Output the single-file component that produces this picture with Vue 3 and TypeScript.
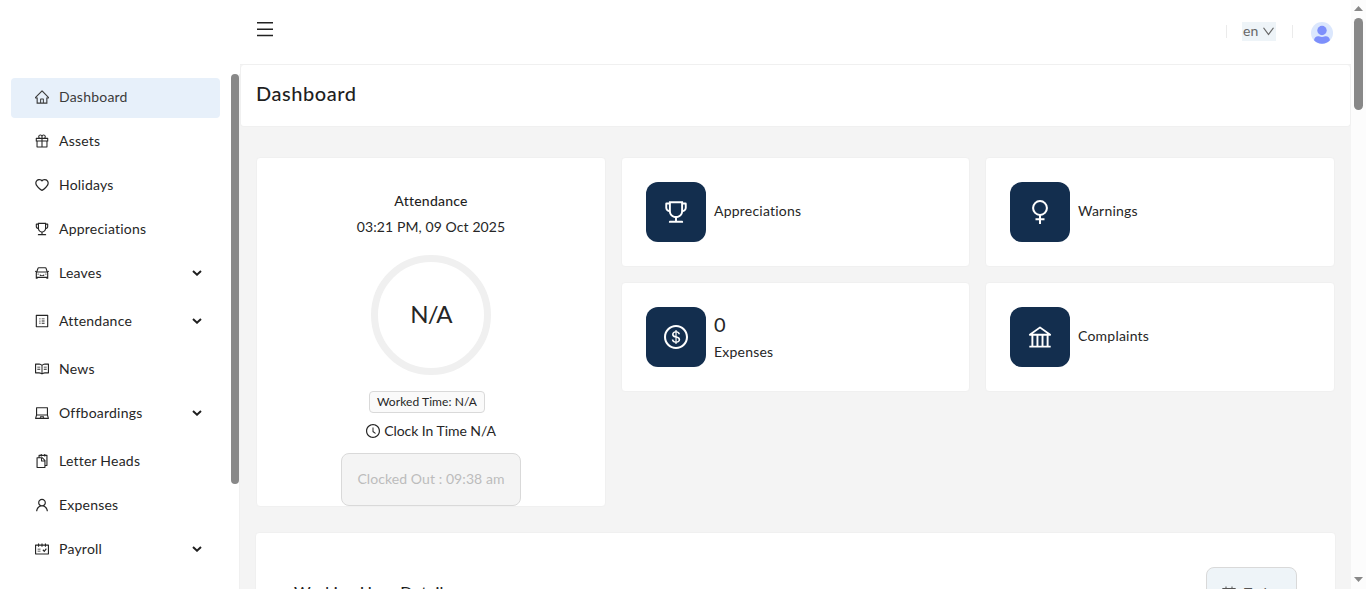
<script setup lang="ts">
type Shape = { paths: string[]; strokes?: string[] }

const ring = 'M512 64C264.6 64 64 264.6 64 512s200.6 448 448 448 448-200.6 448-448S759.4 64 512 64zm0 820c-205.4 0-372-166.6-372-372s166.6-372 372-372 372 166.6 372 372-166.6 372-372 372z'

const icons: Record<string, Shape> = {
  home: { paths: ['M946.5 505L560.1 118.8l-25.9-25.9a31.5 31.5 0 00-44.4 0L77.5 505a63.9 63.9 0 00-18.8 46c.4 35.2 29.7 63.3 64.9 63.3h42.5V940h691.8V614.3h43.4c17.1 0 33.2-6.7 45.3-18.8a63.6 63.6 0 0018.7-45.3c0-17-6.7-33.1-18.8-45.2zM568 868H456V664h112v204zm217.9-325.7V868H632V640c0-22.1-17.9-40-40-40H432c-22.1 0-40 17.9-40 40v228H238.1V542.3h-96l370-369.7 23.1 23.1L882 542.3h-96.1z'] },
  gift: { paths: ['M880 310H732.4c13.6-21.4 21.6-46.8 21.6-74 0-76.1-61.9-138-138-138-41.4 0-78.7 18.4-104 47.4-25.3-29-62.6-47.4-104-47.4-76.1 0-138 61.9-138 138 0 27.2 7.9 52.6 21.6 74H144c-17.7 0-32 14.3-32 32v200c0 4.4 3.6 8 8 8h40v344c0 17.7 14.3 32 32 32h640c17.7 0 32-14.3 32-32V550h40c4.4 0 8-3.6 8-8V342c0-17.7-14.3-32-32-32zm-334-74c0-38.6 31.4-70 70-70s70 31.4 70 70-31.4 70-70 70h-70v-70zm-138-70c38.6 0 70 31.4 70 70v70h-70c-38.6 0-70-31.4-70-70s31.4-70 70-70zM180 482V378h298v104H180zm48 68h250v308H228V550zm568 308H546V550h250v308zm48-376H546V378h298v104z'] },
  heart: { paths: ['M923 283.6a260.04 260.04 0 00-56.9-82.8 264.4 264.4 0 00-84-55.5A265.34 265.34 0 00679.7 125c-49.3 0-97.4 13.5-139.2 39-10 6.1-19.5 12.8-28.5 20.1-9-7.3-18.5-14-28.5-20.1-41.8-25.5-89.9-39-139.2-39-35.5 0-69.9 6.8-102.4 20.3-31.4 13-59.7 31.7-84 55.5a258.44 258.44 0 00-56.9 82.8c-13.9 32.3-21 66.6-21 101.9 0 33.3 6.8 68 20.3 103.3 11.3 29.5 27.5 60.1 48.2 91 32.8 48.9 77.9 99.9 133.9 151.6 92.8 85.7 184.7 144.9 188.6 147.3l23.7 15.2c10.5 6.7 24 6.7 34.5 0l23.7-15.2c3.9-2.5 95.7-61.6 188.6-147.3 56-51.7 101.1-102.7 133.9-151.6 20.7-30.9 37-61.5 48.2-91 13.5-35.3 20.3-70 20.3-103.3.1-35.3-7-69.6-20.9-101.9zM512 814.8S156 586.7 156 385.5C156 283.6 240.3 201 344.3 201c73.1 0 136.5 40.8 167.7 100.4C543.2 241.8 606.6 201 679.7 201c104 0 188.3 82.6 188.3 184.5 0 201.2-356 429.3-356 429.3z'] },
  trophy: { paths: ['M868 160h-92v-40c0-4.4-3.6-8-8-8H256c-4.4 0-8 3.6-8 8v40h-92a44 44 0 00-44 44v148c0 81.7 60 149.6 138.2 162C265.7 630.2 359 721.7 476 734.5v105.2H280c-17.7 0-32 14.3-32 32V904c0 4.4 3.6 8 8 8h512c4.4 0 8-3.6 8-8v-32.3c0-17.7-14.3-32-32-32H548V734.5C665 721.7 758.3 630.2 773.8 514 852 501.6 912 433.7 912 352V204a44 44 0 00-44-44zM184 352V232h64v207.6a91.99 91.99 0 01-64-87.6zm520 128c0 49.1-19.1 95.4-53.9 130.1-34.8 34.8-81 53.9-130.1 53.9h-16c-49.1 0-95.4-19.1-130.1-53.9-34.8-34.8-53.9-81-53.9-130.1V184h384v296zm136-128c0 41-26.9 75.8-64 87.6V232h64v120z'] },
  car: { paths: ['M959 413.4L935.3 372a8 8 0 00-10.9-2.9l-50.7 29.6-78.3-216.2a63.9 63.9 0 00-60.9-44.4H301.2c-34.7 0-65.5 22.4-76.2 55.5l-74.6 205.2-50.8-29.6a8 8 0 00-10.9 2.9L65 413.4c-2.2 3.8-.9 8.6 2.9 10.8l60.4 35.2-14.5 40c-1.2 3.2-1.8 6.6-1.8 10v348.2c0 15.7 11.8 28.4 26.3 28.4h67.6c12.3 0 23-9.3 25.6-22.3l7.7-37.7h545.6l7.7 37.7c2.7 13 13.3 22.3 25.6 22.3h67.6c14.5 0 26.3-12.7 26.3-28.4V509.4c0-3.4-.6-6.8-1.8-10l-14.5-40 60.3-35.2a8 8 0 003-10.8zM840 517v237H184V517l15.6-43h624.8l15.6 43zM292.7 218.1l.5-1.3.4-1.3c1.1-3.3 4.1-5.5 7.6-5.5h427.6l75.4 208H220l72.7-199.9z', 'M380 704h264c4.4 0 8-3.6 8-8v-84c0-4.4-3.6-8-8-8h-40c-4.4 0-8 3.6-8 8v36H428v-36c0-4.4-3.6-8-8-8h-40c-4.4 0-8 3.6-8 8v84c0 4.4 3.6 8 8 8zM224 581a40 40 0 1080 0 40 40 0 10-80 0zM720 581a40 40 0 1080 0 40 40 0 10-80 0z'] },
  profile: { paths: ['M880 112H144c-17.7 0-32 14.3-32 32v736c0 17.7 14.3 32 32 32h736c17.7 0 32-14.3 32-32V144c0-17.7-14.3-32-32-32zm-40 728H184V184h656v656z', 'M492 400h184v-56H492zM492 540h184v-56H492zM492 680h184v-56H492zM340 372a40 40 0 1080 0 40 40 0 10-80 0zM340 512a40 40 0 1080 0 40 40 0 10-80 0zM340 652a40 40 0 1080 0 40 40 0 10-80 0z'] },
  read: { paths: ['M928 161H699.2c-49.1 0-97.1 14.1-138.4 40.7L512 233l-48.8-31.3A255.2 255.2 0 00324.8 161H96c-17.7 0-32 14.3-32 32v568c0 17.7 14.3 32 32 32h228.8c49.1 0 97.1 14.1 138.4 40.7l44.4 28.6c1.3.8 2.8 1.3 4.3 1.3s3-.4 4.3-1.3l44.4-28.6C602 807.1 650.1 793 699.2 793H928c17.7 0 32-14.3 32-32V193c0-17.7-14.3-32-32-32zM324.8 721H136V233h188.8c35.4 0 69.8 10.1 99.5 29.2l48.8 31.3 6.9 4.5v462c-47.6-25.6-100.8-39-155.2-39zm563.2 0H699.2c-54.4 0-107.6 13.4-155.2 39V298l6.9-4.5 48.8-31.3c29.7-19.1 64.1-29.2 99.5-29.2H888v488z', 'M211 361h186v60H211zM627 361h186v60H627zM211 501h186v60H211zM627 501h186v60H627z'] },
  laptop: { paths: ['M956.9 845.1L896.4 632V168c0-17.7-14.3-32-32-32h-704c-17.7 0-32 14.3-32 32v464L67.9 845.1C60.4 866 75.8 888 98 888h828.8c22.2 0 37.6-22 30.1-42.9zM200.4 208h624v395h-624V208zm228.3 608l8.1-37h150.3l8.1 37H428.7zm224 0l-19.1-86.7c-.8-3.7-4.1-6.3-7.8-6.3H398.2c-3.8 0-7 2.6-7.8 6.3L371.3 816H151l42.3-149h638.2l42.3 149H652.7z'] },
  snippets: { paths: ['M832 112H724V72c0-4.4-3.6-8-8-8h-56c-4.4 0-8 3.6-8 8v40H500V72c0-4.4-3.6-8-8-8h-56c-4.4 0-8 3.6-8 8v40H320c-17.7 0-32 14.3-32 32v120h-96c-17.7 0-32 14.3-32 32v632c0 17.7 14.3 32 32 32h512c17.7 0 32-14.3 32-32v-96h96c17.7 0 32-14.3 32-32V144c0-17.7-14.3-32-32-32zM664 888H232V336h218v174c0 22.1 17.9 40 40 40h174v338zm0-402H514V336h.2L664 485.8v.2zm128 274h-56V456L544 264H360v-80h68v32c0 4.4 3.6 8 8 8h56c4.4 0 8-3.6 8-8v-32h152v32c0 4.4 3.6 8 8 8h56c4.4 0 8-3.6 8-8v-32h68v576z'] },
  user: { paths: ['M858.5 763.6a374 374 0 00-80.6-119.5 375.63 375.63 0 00-119.5-80.6c-.4-.2-.8-.3-1.2-.5C719.5 518 760 444.7 760 362c0-137-111-248-248-248S264 225 264 362c0 82.7 40.5 156 102.8 201.1-.4.2-.8.3-1.2.5-44.8 18.9-85 46-119.5 80.6a375.63 375.63 0 00-80.6 119.5A371.7 371.7 0 00136 901.8a8 8 0 008 8.2h60c4.4 0 7.9-3.5 8-7.8 2-77.2 33-149.5 87.8-204.3 56.7-56.7 132-87.9 212.2-87.9s155.5 31.2 212.2 87.9C779 752.7 810 825 812 902.2c.1 4.4 3.6 7.8 8 7.8h60a8 8 0 008-8.2c-1-47.8-10.9-94.3-29.5-138.2zM512 534c-45.9 0-89.1-17.9-121.6-50.4S340 407.9 340 362c0-45.9 17.9-89.1 50.4-121.6S466.1 190 512 190s89.1 17.9 121.6 50.4S684 316.1 684 362c0 45.9-17.9 89.1-50.4 121.6S557.9 534 512 534z'] },
  schedule: { paths: ['M928 224H768v-56c0-4.4-3.6-8-8-8h-56c-4.4 0-8 3.6-8 8v56H548v-56c0-4.4-3.6-8-8-8h-56c-4.4 0-8 3.6-8 8v56H328v-56c0-4.4-3.6-8-8-8h-56c-4.4 0-8 3.6-8 8v56H96c-17.7 0-32 14.3-32 32v576c0 17.7 14.3 32 32 32h832c17.7 0 32-14.3 32-32V256c0-17.7-14.3-32-32-32zm-40 568H136V296h120v56c0 4.4 3.6 8 8 8h56c4.4 0 8-3.6 8-8v-56h148v56c0 4.4 3.6 8 8 8h56c4.4 0 8-3.6 8-8v-56h148v56c0 4.4 3.6 8 8 8h56c4.4 0 8-3.6 8-8v-56h120v496z', 'M416 496H232v48h184zM416 616H232v48h184z'], strokes: ['M570 560L658 664L790 488'] },
  woman: { paths: [], strokes: ['M512 104a258 258 0 100 516 258 258 0 100-516zM512 620V960M344 780H680'] },
  dollar: { paths: [ring, 'M559.7 488.8l-25.4-5.9V348.6c38 5.2 61.5 29 65.5 58.2.5 4 3.9 6.9 7.9 6.9h44.9c4.7 0 8.4-4.1 8-8.8-6.1-62.3-57.4-102.3-125.9-109.2V263c0-4.4-3.6-8-8-8h-28.1c-4.4 0-8 3.6-8 8v33c-70.8 6.9-126.2 46-126.2 119 0 67.6 49.8 100.2 102.1 112.7l24.7 6.3v142.7c-44.2-5.9-69-29.5-74.1-61.3-.6-3.8-4-6.6-7.9-6.6H363c-4.7 0-8.4 4-8 8.7 4.5 55 46.2 105.6 135.2 112.1V761c0 4.4 3.6 8 8 8h28.4c4.4 0 8-3.6 8-8.1l-.2-31.7c78.3-6.9 134.3-48.8 134.3-124-.1-69.4-44.2-100.4-109-116.4zm-68.6-16.2c-5.6-1.6-10.3-3.1-15-5-33.8-12.2-49.5-31.9-49.5-57.3 0-36.3 27.5-57 64.5-61.7v124zM534.3 677V543.3c3.1.9 5.9 1.6 8.8 2.2 47.3 14.4 63.2 34.4 63.2 65.1 0 39.1-29.4 62.6-72 66.4z'] },
  bank: { paths: ['M894 462c30.9 0 43.8-39.7 18.7-58L530.8 126.2a31.81 31.81 0 00-37.6 0L111.3 404c-25.1 18.2-12.2 58 18.8 58H192v374h-72c-4.4 0-8 3.6-8 8v52c0 4.4 3.6 8 8 8h784c4.4 0 8-3.6 8-8v-52c0-4.4-3.6-8-8-8h-72V462h62zM512 196.7l271.1 197.3H240.9L512 196.7zM264 462h117v374H264V462zm189 0h117v374H453V462zm307 374H642V462h118v374z'] },
  clock: { paths: [ring, 'M686.7 638.6L544.1 535.5V288c0-4.4-3.6-8-8-8H488c-4.4 0-8 3.6-8 8v275.4c0 2.6 1.2 5 3.3 6.5l165.4 120.6c3.6 2.6 8.6 1.8 11.2-1.7l28.6-39c2.6-3.7 1.8-8.7-1.8-11.2z'] },
  down: { paths: ['M884 256h-75c-5.1 0-9.9 2.5-12.9 6.6L512 654.2 227.9 262.6c-3-4.1-7.8-6.6-12.9-6.6h-75c-6.5 0-10.3 7.4-6.5 12.7l352.6 486.1c12.8 17.6 39 17.6 51.7 0l352.6-486.1c3.9-5.3.1-12.7-6.4-12.7z'] },
}

const menu = [
  { label: 'Dashboard', icon: 'home', active: true },
  { label: 'Assets', icon: 'gift' },
  { label: 'Holidays', icon: 'heart' },
  { label: 'Appreciations', icon: 'trophy' },
  { label: 'Leaves', icon: 'car', sub: true },
  { label: 'Attendance', icon: 'profile', sub: true },
  { label: 'News', icon: 'read' },
  { label: 'Offboardings', icon: 'laptop', sub: true },
  { label: 'Letter Heads', icon: 'snippets' },
  { label: 'Expenses', icon: 'user' },
  { label: 'Payroll', icon: 'schedule', sub: true },
]

const stats = [
  { label: 'Appreciations', icon: 'trophy' },
  { label: 'Warnings', icon: 'woman' },
  { label: 'Expenses', icon: 'dollar', value: '0' },
  { label: 'Complaints', icon: 'bank' },
]
</script>

<template>
  <div class="app">
    <aside class="sidebar">
      <nav class="menu">
        <a v-for="m in menu" :key="m.label" class="item" :class="{ active: m.active, sub: m.sub }">
          <svg class="icon" viewBox="64 64 896 896">
            <path v-for="p in icons[m.icon].paths" :key="p" :d="p" />
            <path v-for="p in icons[m.icon].strokes" :key="p" :d="p" class="line" />
          </svg>
          <span class="label">{{ m.label }}</span>
          <svg v-if="m.sub" class="chevron" viewBox="0 0 10 6"><path d="M1 1L5 4.7L9 1" /></svg>
        </a>
      </nav>
      <div class="side-track"><div class="side-thumb"></div></div>
    </aside>

    <main class="main">
      <header class="topbar">
        <svg class="burger" viewBox="0 0 16 15"><path d="M0 .75h16M0 7.25h16M0 13.5h16" /></svg>
        <div class="tools">
          <i class="divider"></i>
          <button class="lang"><span>en</span>
            <svg viewBox="64 64 896 896"><path :d="icons.down.paths[0]" /></svg>
          </button>
          <i class="divider"></i>
          <svg class="avatar" viewBox="0 0 22 22">
            <circle cx="11" cy="11" r="11" fill="#dbe7fd" />
            <circle cx="11" cy="8.5" r="4.7" fill="#7d8ffb" />
            <path d="M3 18.3C3.4 15.6 5 14.3 7 14.3c1.4 0 2 .6 4 .6s2.600-.6 4-.6c2 0 3.600 1.300 4 4A11 11 0 0 1 3 18.300z" fill="#7d8ffb" />
          </svg>
        </div>
      </header>
      <section class="page-head"><h1>Dashboard</h1></section>

      <section class="grid">
        <article class="card attendance">
          <h2>Attendance</h2>
          <p class="date">03:21 PM, 09 Oct 2025</p>
          <div class="gauge"><span>N/A</span></div>
          <span class="tag">Worked Time: N/A</span>
          <p class="clock">
            <svg viewBox="64 64 896 896"><path v-for="p in icons.clock.paths" :key="p" :d="p" /></svg>
            <span>Clock In Time N/A</span>
          </p>
          <button class="out" disabled>Clocked Out : 09:38 am</button>
        </article>
        <div class="stats">
          <article v-for="s in stats" :key="s.label" class="card stat">
            <div class="tile">
              <svg viewBox="64 64 896 896">
                <path v-for="p in icons[s.icon].paths" :key="p" :d="p" />
                <path v-for="p in icons[s.icon].strokes" :key="p" :d="p" class="line" />
              </svg>
            </div>
            <div class="info">
              <strong v-if="s.value">{{ s.value }}</strong>
              <span>{{ s.label }}</span>
            </div>
          </article>
        </div>
      </section>

      <section class="card hours">
        <h3>Working Hour Details</h3>
        <button class="today">
          <svg viewBox="0 0 14 14"><path d="M.6 2.500h12.800v10.900H.6zM.6 6h12.800M4 .5v4M10 .5v4" /></svg>
          <span>Today</span>
        </button>
      </section>
    </main>

    <div class="scroll">
      <svg class="arrow" viewBox="0 0 9 5"><path d="M0 5L4.500 0L9 5z" /></svg>
      <div class="thumb"></div>
      <svg class="arrow last" viewBox="0 0 9 5"><path d="M0 0h9L4.500 5z" /></svg>
    </div>
  </div>
</template>

<style>
html, body { margin: 0; overflow: hidden; }
</style>

<style scoped>
* { box-sizing: border-box; }
.app {
  display: flex;
  width: 1366px;
  height: 589px;
  overflow: hidden;
  background: #fff;
  color: #262626;
  font: 14px/22px Lato, "Open Sans", sans-serif;
  letter-spacing: .22px;
}
svg { display: block; flex: none; fill: currentColor; }
.line { fill: none; stroke: currentColor; stroke-width: 76; }
h1, h2, h3, p { margin: 0; font-weight: 400; }
button { font: inherit; color: inherit; letter-spacing: inherit; }

.sidebar { width: 240px; flex: none; display: flex; padding-top: 74px; }
.menu { width: 231px; padding: 4px 11px 0; display: flex; flex-direction: column; gap: 4px; }
.item { display: flex; align-items: center; height: 40px; flex: none; padding: 0 18px 2px 24px; border-radius: 4px; }
.item.active { background: #e7f0fa; color: #3b3b3b; }
.item.sub { margin-bottom: 4px; }
.icon { width: 14px; height: 14px; margin-right: 10px; }
.label { flex: 1; }
.chevron { width: 10px; height: 6px; fill: none; stroke: #1f1f1f; stroke-width: 2; }
.side-track { width: 9px; border-right: 1px solid #f0f0f0; }
.side-thumb { width: 8px; height: 410px; border-radius: 4px; background: #888; }

.main { flex: 1; height: 589px; overflow: hidden; background: #f4f4f4; }
.topbar { height: 65px; padding: 0 18px 0 17px; display: flex; justify-content: space-between; background: #fff; border-bottom: 1px solid #f0f0f0; box-shadow: -1px 0 #f0f0f0; }
.burger { width: 16px; height: 15px; margin-top: 22px; stroke: #222; stroke-width: 1.4; }
.tools { display: flex; height: 22px; margin-top: 22px; align-items: flex-start; }
.divider { width: 1px; height: 13px; margin-top: 3px; background: #ebebeb; }
.lang { display: flex; align-items: center; gap: 3px; height: 19px; width: 34px; margin: 0 16px 0 15px; padding: 0 0 1px 1px; border: 0; background: #eef4f8; color: #686868; white-space: nowrap; }
.lang svg { width: 13px; height: 13px; }
.avatar { width: 22px; height: 22px; margin-left: 18px; }
.page-head { height: 62px; padding: 13px 15px; background: #fff; border: 1px solid #f0f0f0; border-top: 0; border-radius: 4px; }
h1 { font-size: 20px; line-height: 30px; font-weight: 500; letter-spacing: .55px; color: #1f1f1f; }

.grid { display: flex; gap: 15px; padding: 30px 16px 0; align-items: flex-start; }
.card { background: #fff; border: 1px solid #f0f0f0; border-radius: 4px; }
.attendance { width: 350px; height: 350px; flex: none; display: flex; flex-direction: column; align-items: center; padding-top: 32px; }
h2 { font-size: 14px; line-height: 22px; font-weight: 500; color: #1f1f1f; }
.date { margin-top: 4px; letter-spacing: .1px; }
.gauge { width: 120px; height: 120px; margin-top: 17px; padding-bottom: 2px; border: 7px solid #f0f0f0; border-radius: 50%; display: grid; place-items: center; font-size: 24px; letter-spacing: -.8px; flex: none; }
.tag { height: 22px; margin: 16px 8px 0 0; padding: 0 7px; border: 1px solid #d9d9d9; border-radius: 4px; background: #fafafa; font-size: 12px; line-height: 20px; letter-spacing: .08px; }
.clock { display: flex; align-items: center; gap: 4px; margin-top: 7px; letter-spacing: -.05px; }
.clock svg { width: 14px; height: 14px; }
.out { width: 180px; height: 53px; flex: none; margin-top: 11px; padding: 0 0 2px; border: 1px solid #d9d9d9; border-radius: 8px; background: #f4f4f4; color: #bcbcbc; white-space: nowrap; letter-spacing: .08px; }
.stats { flex: 1; display: grid; grid-template-columns: 349px 350px; gap: 15px; }
.stat { height: 110px; padding: 24px; display: flex; gap: 8px; }
.tile { width: 60px; height: 60px; border-radius: 12px; background: #132e4e; color: #fff; display: grid; place-items: center; }
.tile svg { width: 24px; height: 24px; }
.info { display: flex; flex-direction: column; justify-content: center; height: 58px; }
.info strong { padding-bottom: 2px; font-size: 20px; font-weight: 400; line-height: 30px; }

.hours { height: 400px; margin: 25px 15px 0; padding: 34px 38px; display: flex; justify-content: space-between; }
h3 { margin-top: 11px; font-size: 16px; line-height: 28px; font-weight: 500; letter-spacing: .2px; color: #1f1f1f; }
.today { width: 91px; height: 50px; display: flex; gap: 8px; padding: 18px 15px; border: 1px solid #d9d9d9; border-radius: 8px; background: #eef4f8; color: #555; }
.today svg { width: 14px; height: 14px; fill: none; stroke: currentColor; }
.today span { line-height: 14px; }

.scroll { width: 15px; flex: none; display: flex; flex-direction: column; align-items: center; padding: 6px 0 7px; background: #fcfcfc; }
.arrow { width: 9px; height: 5px; color: #888; }
.thumb { width: 9px; height: 92px; margin-top: 7px; border-radius: 5px; background: #888; }
.last { margin-top: auto; }
</style>
